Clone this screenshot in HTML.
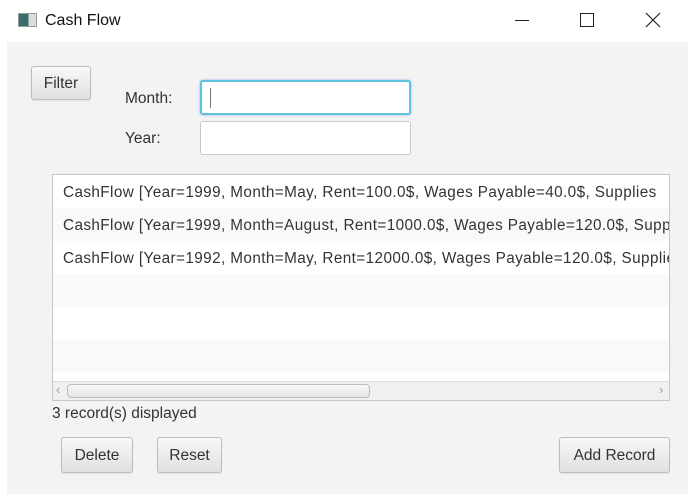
<!DOCTYPE html>
<html><head><style>
*{margin:0;padding:0;box-sizing:border-box}
body{width:695px;height:494px;background:#fff;font-family:"Liberation Sans",sans-serif;color:#333;position:relative;overflow:hidden}
.a{position:absolute}
.content{left:7px;top:42px;width:681px;height:452px;background:#f3f3f3}
.btn{position:absolute;border:1px solid #bdbdbd;border-radius:3px;background:linear-gradient(#f8f8f8,#e0e0e0);font-size:15.5px;color:#333;text-align:center;box-shadow:0 1px 1px rgba(0,0,0,.08)}
.tf{position:absolute;background:#fff;border:1px solid #c8c8c8;border-radius:3px}
.row{position:absolute;left:0;width:617px;height:33px;font-size:15.3px;line-height:36px;padding-left:10px;white-space:nowrap;overflow:hidden;color:#333;letter-spacing:0.4px}
</style></head><body>
<div class="a" style="left:18px;top:13px;width:19px;height:14px;border:1px solid #999;background:linear-gradient(90deg,#3a6e6a 0 55%,#d8dde0 55%)"></div>
<div class="a" style="left:45px;top:12px;font-size:16px;color:#111">Cash Flow</div>
<div class="a" style="left:515px;top:20px;width:14px;height:1px;background:#222"></div>
<div class="a" style="left:580px;top:13px;width:14px;height:14px;border:1px solid #222"></div>
<svg class="a" style="left:645px;top:12px" width="16" height="16"><path d="M1 1L15 15M15 1L1 15" stroke="#222" stroke-width="1.2"/></svg>
<div class="a content"></div>
<div class="btn" style="left:31px;top:66px;width:60px;height:34px;line-height:34px">Filter</div>
<div class="a" style="left:125px;top:90px;font-size:15.5px">Month:</div>
<div class="a" style="left:125px;top:130px;font-size:15.5px">Year:</div>
<div class="tf" style="left:200px;top:80px;width:211px;height:35px;border:2px solid #5fc3df;box-shadow:0 0 2px #9ad"></div>
<div class="a" style="left:210px;top:88px;width:1px;height:20px;background:#777"></div>
<div class="tf" style="left:200px;top:121px;width:211px;height:34px"></div>
<div class="a" style="left:52px;top:174px;width:618px;height:227px;border:1px solid #c8c8c8;background:#fff;overflow:hidden">
 <div class="row" style="top:0;background:#fff">CashFlow [Year=1999, Month=May, Rent=100.0$, Wages Payable=40.0$, Supplies</div>
 <div class="row" style="top:33px;background:#f9f9f9">CashFlow [Year=1999, Month=August, Rent=1000.0$, Wages Payable=120.0$, Supplies</div>
 <div class="row" style="top:66px;background:#fff">CashFlow [Year=1992, Month=May, Rent=12000.0$, Wages Payable=120.0$, Supplies</div>
 <div class="row" style="top:99px;background:#f9f9f9"></div>
 <div class="row" style="top:132px;background:#fff"></div>
 <div class="row" style="top:165px;background:#f9f9f9"></div>
 <div class="a" style="left:0;top:206px;width:617px;height:20px;background:#f0f0f0;border-top:1px solid #ddd"></div>
 <div class="a" style="left:14px;top:209px;width:303px;height:14px;border:1px solid #bbb;border-radius:4px;background:linear-gradient(#f8f8f8,#e4e4e4)"></div>
 <div class="a" style="left:3px;top:207px;font-size:13px;color:#999">&lsaquo;</div>
 <div class="a" style="left:606px;top:207px;font-size:13px;color:#999">&rsaquo;</div>
</div>
<div class="a" style="left:52px;top:405px;font-size:15.5px">3 record(s) displayed</div>
<div class="btn" style="left:61px;top:437px;width:72px;height:36px;line-height:36px">Delete</div>
<div class="btn" style="left:157px;top:437px;width:65px;height:36px;line-height:36px">Reset</div>
<div class="btn" style="left:559px;top:437px;width:111px;height:36px;line-height:36px">Add Record</div>
</body></html>
